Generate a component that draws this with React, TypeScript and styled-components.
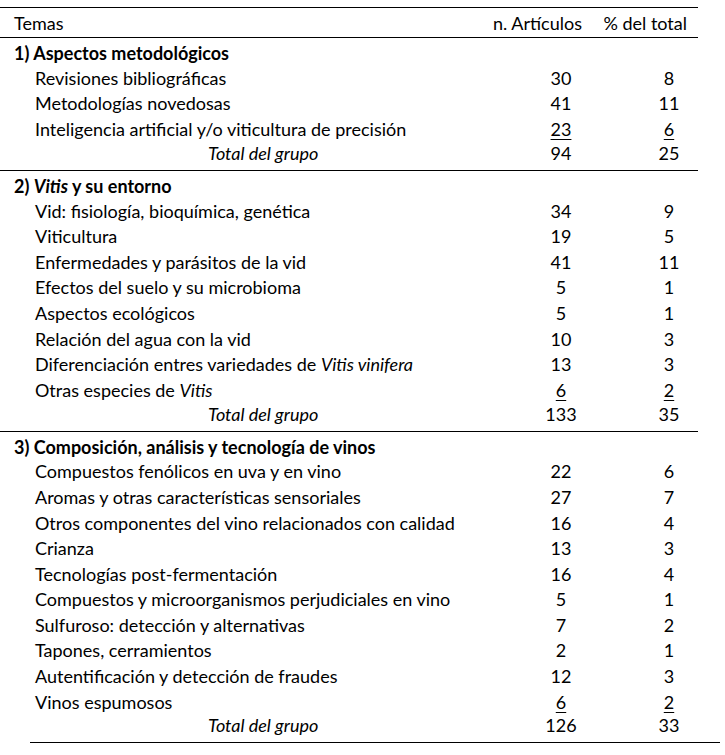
import React from "react";
import styled, { createGlobalStyle } from "styled-components";

const GlobalStyle = createGlobalStyle`
  html, body { margin: 0; padding: 0; background: #ffffff; }
  body {
    font-family: Lato, "Liberation Sans", sans-serif;
    color: #000000;
    font-size: 18px;
  }
`;

const Page = styled.div`
  width: 725px;
  height: 755px;
  padding-top: 7px;
  box-sizing: border-box;
`;

const Table = styled.div`
  width: 698px;
`;

const gridCols = `grid-template-columns: 1fr 100px 108px;`;

const HeaderRow = styled.div`
  display: grid;
  ${gridCols}
  align-items: center;
  height: 29px;
  border-top: 1px solid #000;
  border-bottom: 1px solid #000;
`;

const HeadCell = styled.div<{ $pr?: number; $align?: string; $pl?: number }>`
  text-align: ${(p) => p.$align ?? "right"};
  padding-right: ${(p) => p.$pr ?? 0}px;
  padding-left: ${(p) => p.$pl ?? 0}px;
  white-space: nowrap;
`;

const Group = styled.div<{ $ruled: boolean }>`
  padding-top: 3px;
  padding-bottom: 7px;
  border-bottom: ${(p) => (p.$ruled ? "1px solid #000" : "none")};
`;

const Row = styled.div<{ $h: number }>`
  display: grid;
  ${gridCols}
  align-items: center;
  height: ${(p) => p.$h}px;
`;

const Label = styled.div<{ $indent: number; $italic?: boolean; $bold?: boolean }>`
  padding-left: ${(p) => p.$indent}px;
  font-style: ${(p) => (p.$italic ? "italic" : "normal")};
  font-weight: ${(p) => (p.$bold ? 700 : 400)};
  white-space: nowrap;
`;

const Num = styled.div<{ $pl: number; $under?: boolean }>`
  padding-left: ${(p) => p.$pl}px;
  text-align: center;
  text-decoration: ${(p) => (p.$under ? "underline" : "none")};
  text-underline-offset: 3px;
  text-decoration-thickness: 1px;
`;

const BottomRule = styled.div`
  margin-left: 30px;
  width: 690px;
  border-top: 1px solid #000;
`;

type Item = { label: React.ReactNode; n: number; p: number };
type GroupData = { title: React.ReactNode; items: Item[]; total: [number, number] };

const groups: GroupData[] = [
  {
    title: <>1) Aspectos metodológicos</>,
    items: [
      { label: "Revisiones bibliográficas", n: 30, p: 8 },
      { label: "Metodologías novedosas", n: 41, p: 11 },
      { label: "Inteligencia artificial y/o viticultura de precisión", n: 23, p: 6 },
    ],
    total: [94, 25],
  },
  {
    title: (
      <>
        2) <i>Vitis</i> y su entorno
      </>
    ),
    items: [
      { label: "Vid: fisiología, bioquímica, genética", n: 34, p: 9 },
      { label: "Viticultura", n: 19, p: 5 },
      { label: "Enfermedades y parásitos de la vid", n: 41, p: 11 },
      { label: "Efectos del suelo y su microbioma", n: 5, p: 1 },
      { label: "Aspectos ecológicos", n: 5, p: 1 },
      { label: "Relación del agua con la vid", n: 10, p: 3 },
      {
        label: (
          <>
            Diferenciación entres variedades de <i>Vitis vinifera</i>
          </>
        ),
        n: 13,
        p: 3,
      },
      {
        label: (
          <>
            Otras especies de <i>Vitis</i>
          </>
        ),
        n: 6,
        p: 2,
      },
    ],
    total: [133, 35],
  },
  {
    title: <>3) Composición, análisis y tecnología de vinos</>,
    items: [
      { label: "Compuestos fenólicos en uva y en vino", n: 22, p: 6 },
      { label: "Aromas y otras características sensoriales", n: 27, p: 7 },
      { label: "Otros componentes del vino relacionados con calidad", n: 16, p: 4 },
      { label: "Crianza", n: 13, p: 3 },
      { label: "Tecnologías post-fermentación", n: 16, p: 4 },
      { label: "Compuestos y microorganismos perjudiciales en vino", n: 5, p: 1 },
      { label: "Sulfuroso: detección y alternativas", n: 7, p: 2 },
      { label: "Tapones, cerramientos", n: 2, p: 1 },
      { label: "Autentificación y detección de fraudes", n: 12, p: 3 },
      { label: "Vinos espumosos", n: 6, p: 2 },
    ],
    total: [126, 33],
  },
];

export default function App() {
  return (
    <>
      <GlobalStyle />
      <Page>
        <Table>
          <HeaderRow>
            <HeadCell $align="left" $pl={14}>
              Temas
            </HeadCell>
            <HeadCell $pr={8}>n. Artículos</HeadCell>
            <HeadCell $pr={11}>% del total</HeadCell>
          </HeaderRow>
          {groups.map((g, gi) => (
            <Group key={gi} $ruled={gi < groups.length - 1}>
              <Row $h={24}>
                <Label $indent={14} $bold>
                  {g.title}
                </Label>
                <div />
                <div />
              </Row>
              {g.items.map((it, i) => {
                const last = i === g.items.length - 1;
                return (
                  <Row $h={25.6} key={i}>
                    <Label $indent={35}>{it.label}</Label>
                    <Num $pl={42} $under={last}>
                      {it.n}
                    </Num>
                    <Num $pl={50} $under={last}>
                      {it.p}
                    </Num>
                  </Row>
                );
              })}
              <Row $h={21}>
                <Label $indent={208} $italic>
                  Total del grupo
                </Label>
                <Num $pl={42}>{g.total[0]}</Num>
                <Num $pl={50}>{g.total[1]}</Num>
              </Row>
            </Group>
          ))}
        </Table>
        <BottomRule />
      </Page>
    </>
  );
}
